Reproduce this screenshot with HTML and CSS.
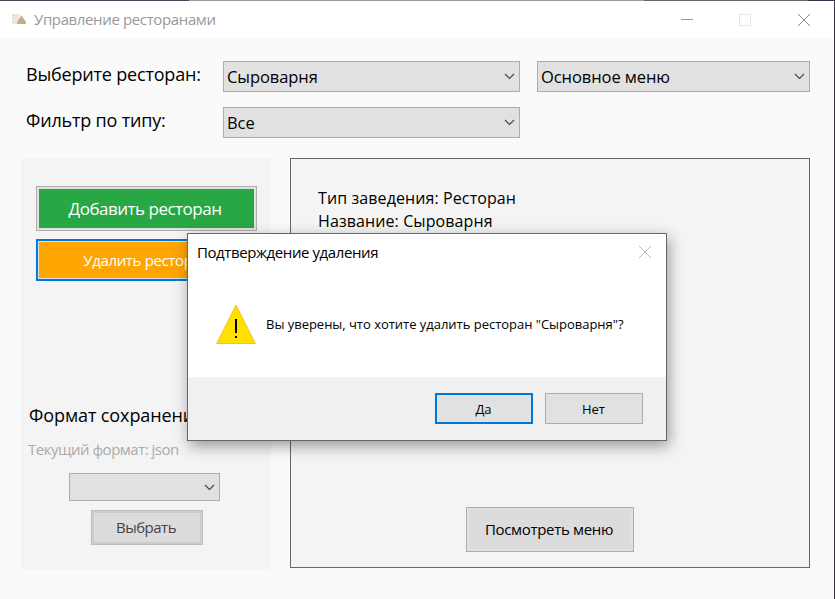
FILE: index.html
```html
<!DOCTYPE html>
<html lang="ru">
<head>
<meta charset="utf-8">
<title>Управление ресторанами</title>
<link rel="stylesheet" href="styles.css">
</head>
<body>
<div class="window">
  <header class="titlebar">
    <svg class="app-icon" width="16" height="12" viewBox="0 0 16 12"><path d="M1 1h8v10H1z" fill="#f0e8da"/><path d="M2.5 2v9" stroke="#cfc0a8" stroke-dasharray="1 2"/><path d="M10.5 2.5l1 1.5 3 4v1H15v2H6V9h.5V8l3-4z" fill="#c4ad8b"/></svg>
    <h1 class="title">Управление ресторанами</h1>
    <div class="controls">
      <svg width="12" height="12" viewBox="0 0 12 12"><path d="M0 5.5h12" stroke="#999"/></svg>
      <svg width="12" height="12" viewBox="0 0 12 12"><path d="M.5.5h11v11H.5z" fill="none" stroke="#e6e6e6"/></svg>
      <svg class="close" width="12" height="12" viewBox="0 0 12 12"><path d="M0 0l12 12M12 0L0 12" stroke="#888"/></svg>
    </div>
  </header>
  <main class="content">
    <div class="filters">
      <label class="label">Выберите ресторан:</label>
      <div class="combo"><span>Сыроварня</span><svg class="chevron" width="11" height="7" viewBox="0 0 11 7"><path d="M1 1l4.5 4.5L10 1"/></svg></div>
      <div class="combo"><span>Основное меню</span><svg class="chevron" width="11" height="7" viewBox="0 0 11 7"><path d="M1 1l4.5 4.5L10 1"/></svg></div>
      <label class="label">Фильтр по типу:</label>
      <div class="combo"><span>Все</span><svg class="chevron" width="11" height="7" viewBox="0 0 11 7"><path d="M1 1l4.5 4.5L10 1"/></svg></div>
    </div>
    <div class="panels">
      <section class="side">
        <button class="btn add"><span>Добавить ресторан</span></button>
        <button class="btn remove"><span>Удалить ресторан</span></button>
        <h2 class="format-title">Формат сохранения</h2>
        <p class="format-now">Текущий формат: json</p>
        <div class="combo format-combo"><svg class="chevron" width="11" height="7" viewBox="0 0 11 7"><path d="M1 1l4.5 4.5L10 1"/></svg></div>
        <button class="btn choose"><span>Выбрать</span></button>
      </section>
      <section class="details">
        <div class="info">
          <p>Тип заведения: Ресторан</p>
          <p>Название: Сыроварня</p>
        </div>
        <button class="btn view"><span>Посмотреть меню</span></button>
      </section>
    </div>
  </main>
</div>
<div class="dialog" role="dialog">
  <div class="dialog-head">
    <h2 class="dialog-title">Подтверждение удаления</h2>
    <svg class="dialog-close" width="12" height="12" viewBox="0 0 12 12"><path d="M0 0l12 12M12 0L0 12" stroke="#bbb"/></svg>
  </div>
  <div class="dialog-body">
    <svg width="40" height="40" viewBox="0 0 40 40"><path d="M20 1L39.3 39.5H.7z" fill="#ffe000" stroke="#ffc010"/><path d="M19 15h2v14h-2zM19 32h2v2h-2z" fill="#000"/></svg>
    <p class="message">Вы уверены, что хотите удалить ресторан "Сыроварня"?</p>
  </div>
  <div class="dialog-foot">
    <button class="dlg-btn primary">Да</button>
    <button class="dlg-btn">Нет</button>
  </div>
</div>
</body>
</html>
```
FILE: styles.css
```css
* { box-sizing: border-box; }
body {
  margin: 0;
  width: 835px;
  height: 599px;
  overflow: hidden;
  font-family: "Open Sans", "Noto Sans", sans-serif;
  color: #000;
  background: linear-gradient(90deg, #4c4458 189px, #9c9c9c 189px 644px, #666 644px 808px, #3a3048 808px);
}
h1, h2, p { margin: 0; font-weight: 400; white-space: nowrap; }
button { font-family: inherit; color: inherit; padding: 0; margin: 0; white-space: nowrap; }
.window { margin-top: 1px; width: 834px; height: 598px; background: #fafafa; }
.titlebar { display: flex; align-items: center; height: 37px; background: #fff; padding: 0 24px 0 11px; }
.app-icon { margin-right: 7px; margin-top: -2px; }
.title { font-size: 15px; line-height: 20px; letter-spacing: -.37px; margin-top: -2px; color: #999; }
.controls { display: flex; gap: 46px; margin-left: auto; }
.controls svg { display: block; }
.controls .close { margin-left: 1px; }
.content { padding: 23px 24px 0 21px; }
.filters { display: grid; grid-template-columns: 185px 297px 273px; column-gap: 17px; row-gap: 15px; }
.label { padding-left: 5px; line-height: 27px; font-size: 18px; letter-spacing: -.19px; white-space: nowrap; }
.combo { display: flex; align-items: center; justify-content: space-between; height: 31px; padding: 0 4px 0 3px; border: 1px solid #adadad; background: #e1e1e1; font-size: 16.5px; letter-spacing: -.08px; }
.chevron { margin-left: auto; fill: none; stroke: #444; stroke-width: 1.1; }
.panels { display: flex; justify-content: space-between; margin-top: 20px; }
.side { display: flex; flex-direction: column; width: 250px; height: 411px; padding: 28px 0 0 15px; background: #f4f4f4; }
.btn { display: flex; align-items: center; justify-content: center; border: 1px solid #adadad; background: #e1e1e1; padding: 2px; }
.btn span { display: flex; align-items: center; justify-content: center; width: 100%; height: 100%; }
.add { width: 221px; height: 45px; color: #fff; font-size: 17px; letter-spacing: -.5px; }
.add span { background: #28a745; padding-right: 3px; }
.remove { width: 221px; height: 42px; margin-top: 8px; border: 2px solid #0078d7; padding: 1px; color: #fff; font-size: 15px; letter-spacing: -.35px; }
.remove span { background: #ffa500; }
.format-title { margin: 121px 0 0 -7px; font-size: 18px; line-height: 27px; letter-spacing: -.1px; }
.format-now { margin: 9px 0 0 -8px; font-size: 15px; line-height: 22px; letter-spacing: -.5px; color: #ababab; }
.format-combo { width: 151px; height: 28px; margin: 13px 0 0 33px; }
.choose { width: 112px; height: 35px; margin: 9px 0 0 55px; border-color: #bfbfbf; background: #ccc; color: #444; font-size: 15px; letter-spacing: -.5px; }
.choose span { padding: 0 2px 2px 0; }
.choose span, .view span { background: #dcdcdc; }
.details { display: flex; flex-direction: column; justify-content: space-between; align-items: center; width: 520px; height: 410px; padding: 28px 0 15px; border: 1px solid #666; background: #f4f4f4; }
.info { align-self: flex-start; padding-left: 27px; font-size: 16px; line-height: 23px; letter-spacing: .1px; }
.view { width: 168px; height: 45px; font-size: 15px; letter-spacing: -.33px; }
.view span { padding: 0 2px 2px 0; }
.dialog { position: absolute; left: 187px; top: 233px; width: 480px; height: 208px; display: flex; flex-direction: column; border: 1px solid #666; background: #fff; box-shadow: 2px 5px 14px rgba(0, 0, 0, .38); }
.dialog-head { display: flex; justify-content: space-between; align-items: center; height: 37px; padding: 0 15px 0 9px; }
.dialog-title { font-size: 15px; line-height: 20px; letter-spacing: -.41px; margin-top: -2px; }
.dialog-close { margin-top: -2px; }
.dialog-body { display: flex; align-items: flex-start; gap: 10px; padding: 33px 0 0 28px; flex: 1; }
.message { font-size: 13px; line-height: 18px; letter-spacing: -.02px; margin-top: 11px; }
.dialog-foot { display: flex; justify-content: flex-end; gap: 12px; height: 63px; padding: 16px 23px 0; background: #f0f0f0; }
.dlg-btn { width: 98px; height: 31px; padding-right: 1px; border: 1px solid #adadad; background: #e1e1e1; font-size: 13px; }
.primary { border: 2px solid #0078d7; }
```
